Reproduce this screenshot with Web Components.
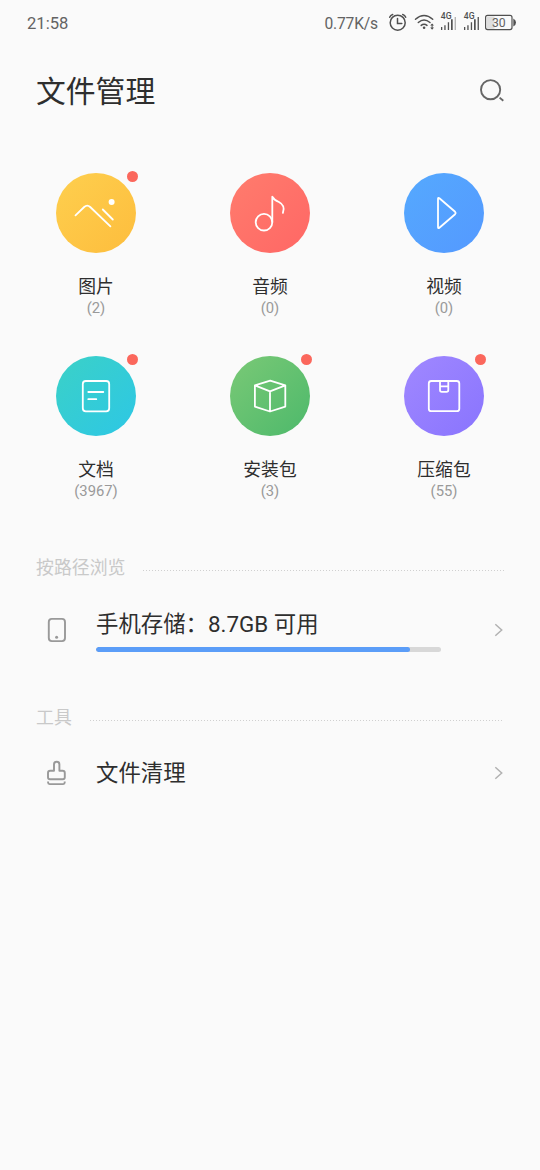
<!DOCTYPE html>
<html lang="zh-CN">
<head>
<meta charset="utf-8">
<title>文件管理</title>
<style>
html,body{margin:0;background:#fafafa}
body{font-family:Roboto,"Noto Sans CJK SC",sans-serif;color:#2e2e2e}
</style>
</head>
<body>
<file-manager></file-manager>
<script>
const define = (name, html) => customElements.define(name, class extends HTMLElement {
  constructor() {
    super();
    this.attachShadow({ mode: 'open' }).innerHTML = typeof html === 'function' ? html(this) : html;
  }
});

define('status-bar', `
<style>
:host{display:flex;height:46px;align-items:center;padding:0 23px 0 27px;color:#636363;font-size:16.6px;line-height:46px}
.speed{margin-left:auto;margin-right:9px;font-size:15.6px;letter-spacing:-.15px}
span{position:relative;top:.5px}
svg{display:block;flex:none}
</style>
<span>21:58</span><span class="speed">0.77K/s</span>
<svg width="130" height="46" viewBox="387 0 130 46" fill="none" stroke="#505050" stroke-width="1.5" stroke-linecap="round">
  <circle cx="397.7" cy="22.7" r="7.5"/><path d="M397.5 18.4v5h4.3M389.7 17.2q.8-2 3-2.7M405.7 17.2q-.8-2-3-2.7"/>
  <path d="M415.5 19.2Q424 11.8 432.7 19.2M418.3 22.5Q424 17.7 430 22.5M421.2 25.4Q424 23 427 25.4"/>
  <circle cx="424.1" cy="27.8" r="1.3" fill="#505050" stroke="none"/>
  <path d="M430.2 25.6l1.9-2.2 1.9 2.2zM430.2 27.6l1.9 2.2 1.9-2.2z" fill="#505050" stroke="none"/>
  <path d="M432.1 25v3" stroke-width="1"/>
  <g stroke="none" fill="#505050">
    <text x="440.8" y="19" font-size="8.8" font-weight="500" textLength="10.8" lengthAdjust="spacingAndGlyphs" font-family="Roboto">4G</text>
    <path d="M441 27h1.3v3H441zM444.3 25.3h1.3V30h-1.3zM447.8 22.3h1.3V30h-1.3zM451 19.3h1.7V30H451z"/><path d="M454.6 17h1.4v13h-1.4z" fill="#b5b5b5"/>
    <text x="463.8" y="19" font-size="8.8" font-weight="500" textLength="10.8" lengthAdjust="spacingAndGlyphs" font-family="Roboto">4G</text>
    <path d="M464 27h1.3v3H464zM467.3 25.3h1.3V30h-1.3zM470.8 22.3h1.3V30h-1.3zM474 19.3h1.7V30H474zM477.6 17h1.3v13h-1.3z"/>
  </g>
  <path d="M487 16.5h7.5v12.3H487z" fill="#dedede" stroke="none"/>
  <rect x="485.6" y="15.4" width="26.4" height="14.2" rx="2" stroke-width="1.2"/>
  <path d="M513.3 18.4q2.7 1.2 2.7 4.1t-2.7 4.1z" fill="#505050" stroke="none"/>
  <text x="498.8" y="27" font-size="12.2" text-anchor="middle" fill="#636363" stroke="none" font-family="Roboto">30</text>
</svg>`);

define('page-header', `
<style>
:host{display:flex;justify-content:space-between;align-items:center;height:92px;padding:0 34px 0 36px}
h1{margin:0;font-size:29.8px;font-weight:400;line-height:92px}
svg{display:block}
</style>
<h1><slot></slot></h1>
<svg width="28" height="28" viewBox="478 78 28 28" fill="none" stroke="#666" stroke-width="1.9"><circle cx="490.6" cy="89.7" r="9.6"/><path d="M499.6 97.6l3.7 3.2"/></svg>`);

const glyphs = {
  image: '<path d="M19.5 42.3l8.7-8.3q3-2.8 6 0l20.2 19.3M46.8 36.5l10 10"/><circle cx="55.6" cy="28.9" r="3" fill="#fff" stroke="none"/>',
  audio: '<circle cx="34" cy="49.2" r="8.3"/><path d="M42.3 49V23.7q1.8 3.2 6.6 5.3 6.8 3.6 4 10.8"/>',
  video: '<path d="M34 26v28q0 1.8 1.4.7l15.7-13.5q1.2-1.2 0-2.4L35.4 25.3q-1.4-1.1-1.4.7z"/>',
  doc: '<rect x="26.8" y="25" width="26.4" height="30.3" rx="3"/><path d="M32.3 36h15M32.3 43.2h8"/>',
  apk: '<path d="M24.9 29.4L40.2 24.7 55.3 29.4V50.6L40 55.5 24.9 50.6zM24.9 29.4L40 35.3 55.3 29.4M40 35.3v20"/>',
  zip: '<rect x="24.8" y="25" width="30.5" height="30.2" rx="2.5"/><path d="M36 25v9q0 1.8 1.8 1.8h4.7q1.8 0 1.8-1.8v-9M36 30.3h8"/>'
};
define('category-tile', el => `
<style>
:host{display:flex;flex-direction:column;align-items:center;height:183px}
.disc{position:relative;width:80px;height:80px;border-radius:50%;background:linear-gradient(135deg,${el.getAttribute('from')},${el.getAttribute('to')})}
svg{display:block}
.dot{position:absolute;left:71px;top:-2.5px;width:11px;height:11px;border-radius:50%;background:#fb675c}
.name{margin-top:22px;height:23px;line-height:24px;font-size:17.8px}
.count{height:20px;line-height:20px;font-size:14.8px;color:#999}
</style>
<div class="disc"><svg width="80" height="80" fill="none" stroke="#fff" stroke-width="1.8" stroke-linejoin="round" stroke-linecap="round">${glyphs[el.getAttribute('icon')]}</svg>${el.hasAttribute('dot') ? '<i class="dot"></i>' : ''}</div>
<div class="name"><slot></slot></div><div class="count">(${el.getAttribute('count')})</div>`);

define('category-grid', `
<style>:host{display:grid;grid-template-columns:repeat(3,174px);justify-content:center;padding-top:35px}</style><slot></slot>`);

define('section-title', `
<style>
:host{display:flex;align-items:center;height:36px;padding:0 36px;font-size:17.9px;line-height:36px;color:#c9c9c9}
i{flex:1;height:1px;margin:5px 0 0 18px;background:repeating-linear-gradient(90deg,#d0d0d0 0 1px,#fafafa 1px 3px)}
</style><slot></slot><i></i>`);

const rowIcons = {
  phone: '<rect x="12.8" y="6.9" width="16.2" height="22.2" rx="3"/><circle cx="20.6" cy="25.3" r="1.5" fill="#999" stroke="none"/>',
  clean: '<path d="M18 15.8V9.4q0-2.6 2.7-2.6t2.7 2.6v6.4h3.2q2.2 0 2.2 2.2v4.2q0 2-2 2H14q-2 0-2-2V18q0-2.2 2.2-2.2zM12.1 26.6v1q0 1.5 1.5 1.5h13.6q1.5 0 1.5-1.5v-1"/>'
};
define('list-row', el => `
<style>
:host{display:flex;align-items:center;height:60px;padding:0 36px}
.icon{flex:none;width:60px}
.body{width:345px;font-size:22.4px;line-height:32px}
.chev{margin-left:auto}
svg{display:block}
</style>
<svg class="icon" width="60" height="36" viewBox="0 0 60 36" fill="none" stroke="#999" stroke-width="1.9" stroke-linejoin="round">${rowIcons[el.getAttribute('icon')]}</svg>
<div class="body"><slot></slot></div>
<svg class="chev" width="10" height="14" fill="none" stroke="#b2b2b2" stroke-width="1.5"><path d="M1.3 1.2L7.7 7 1.3 12.8"/></svg>`);

define('usage-bar', el => `
<style>
:host{display:block;height:5px;margin-top:7px;border-radius:3px;background:#d8d8d8;overflow:hidden}
div{height:5px;width:${el.getAttribute('value')}%;border-radius:3px;background:#5b9df8}
</style><div></div>`);

define('file-manager', `
<style>
:host{display:block;width:540px;height:1170px;background:#fafafa;overflow:hidden}
.browse{margin-top:11px}
.storage{margin-top:14px}
.tools{margin-top:40px}
.clean{margin-top:7px}
</style>
<status-bar></status-bar>
<page-header>文件管理</page-header>
<category-grid>
  <category-tile icon="image" from="#fecf4e" to="#fdbd3d" count="2" dot>图片</category-tile>
  <category-tile icon="audio" from="#ff7c6d" to="#ff6765" count="0">音频</category-tile>
  <category-tile icon="video" from="#55a9fe" to="#5499ff" count="0">视频</category-tile>
  <category-tile icon="doc" from="#3bd1c7" to="#2dc7e5" count="3967" dot>文档</category-tile>
  <category-tile icon="apk" from="#7ac976" to="#4db96b" count="3" dot>安装包</category-tile>
  <category-tile icon="zip" from="#a088ff" to="#8974fe" count="55" dot>压缩包</category-tile>
</category-grid>
<section-title class="browse">按路径浏览</section-title>
<list-row class="storage" icon="phone">手机存储：8.7GB 可用<usage-bar value="91"></usage-bar></list-row>
<section-title class="tools">工具</section-title>
<list-row class="clean" icon="clean">文件清理</list-row>`);
</script>
</body>
</html>
